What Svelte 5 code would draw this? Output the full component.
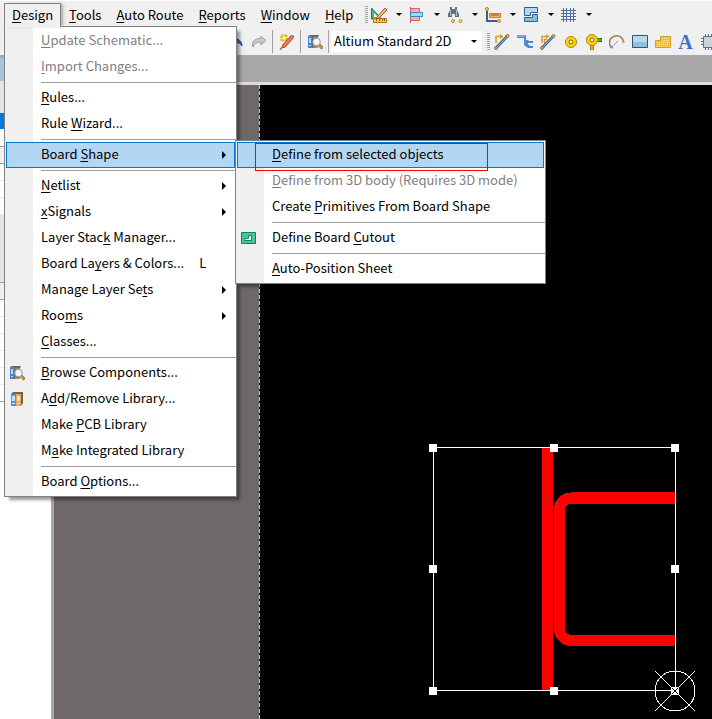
<script>
  const menus = ['_Design', '_Tools', '_Auto Route', '_Reports', '_Window', '_Help'];

  const designMenu = [
    { label: '_Update Schematic...', disabled: true },
    { label: '_Import Changes...', disabled: true },
    null,
    { label: '_Rules...' },
    { label: 'Rule _Wizard...' },
    null,
    { label: 'Board _Shape', submenu: true, open: true },
    null,
    { label: '_Netlist', submenu: true },
    { label: '_xSignals', submenu: true },
    { label: 'Layer Stac_k Manager...' },
    { label: 'Board La_yers & Colors...', shortcut: 'L' },
    { label: 'Manage Layer Se_ts', submenu: true },
    { label: 'Roo_ms', submenu: true },
    { label: '_Classes...' },
    null,
    { label: '_Browse Components...', icon: 'browse' },
    { label: 'A_dd/Remove Library...', icon: 'library' },
    { label: 'Make _PCB Library' },
    { label: 'M_ake Integrated Library' },
    null,
    { label: 'Board _Options...' }
  ];

  const shapeMenu = [
    { label: '_Define from selected objects', active: true },
    { label: '_Define from 3D body (Requires 3D mode)', disabled: true },
    { label: 'Create _Primitives From Board Shape' },
    null,
    { label: 'Define Board _Cutout', icon: 'cutout' },
    null,
    { label: '_Auto-Position Sheet' }
  ];

  const utilityTools = ['draw', 'align', 'find', 'dimension', 'room', 'grid'];
  const placeTools = ['route', 'diffpair', 'multiroute', 'pad', 'via', 'arc', 'fill', 'polygon', 'text', 'component'];

  // rows of the side panel: [height, style]
  const panelRows = [
    [3, 'edge'], [23, 'heading'], [32, 'tools'], [16, 'selected'], [17, 'blank'],
    [18, 'cell'], [17, 'row'], [17, 'row'], [16, 'blank'], [68, 'tools'],
    [18, 'cell'], [17, 'row'], [17, 'row'], [17, 'row'], [17, 'row'], [17, 'row'], [17, 'last']
  ];

  const handles = [[14, 14], [135, 14], [256, 14], [14, 135], [256, 135], [14, 257], [135, 257], [256, 257]];

  // the letter after "_" is the access key
  function split(label) {
    const i = label.indexOf('_');
    return [label.slice(0, i), label[i + 1], label.slice(i + 2)];
  }
</script>

{#snippet caption(label)}
  {@const [before, key, after] = split(label)}
  <span class="caption">{before}<u>{key}</u>{after}</span>
{/snippet}

{#snippet icon(name)}
  <svg class="icon" viewBox="0 0 16 16" width="16" height="16" aria-hidden="true">
    {#if name === 'browse'}
      <path d="M1 2l2-1h9l-1 2v11H1z" fill="#5e6a78" />
      <path d="M1 2h4v12H1z" fill="#4a86d8" />
      <path d="M2 4h2v5H2zM2 11h2v1H2z" fill="#b9d6f7" />
      <path d="M6 3h5v11H6z" fill="#b08b4e" />
      <circle cx="9.5" cy="8" r="3.8" fill="#f4f9fd" stroke="#8796a8" />
      <path d="M12.2 11l3.3 3.5" stroke="#7a5316" stroke-width="3" />
      <path d="M12.2 11l3 3.2" stroke="#e2a545" stroke-width="1.6" />
    {:else if name === 'library'}
      <path d="M2 3l2-2h10v11l-2 3H2z" fill="#76624c" />
      <path d="M2 3h5v12H2z" fill="#5590da" />
      <path d="M3 5h3v5H3zM3 12h3v1H3z" fill="#c8defa" />
      <path d="M7 3h5v12H7z" fill="#e5aa5c" />
      <path d="M8 5h3v5H8zM8 12h3v1H8z" fill="#fbe2ae" />
    {:else if name === 'cutout'}
      <path d="M1.5 2.5h14v11h-14z" fill="#4fc597" stroke="#078458" />
      <path d="M8.5 5.5h3v5h-7v-2h4z" fill="#fff" stroke="#13855d" />
    {:else if name === 'undo'}
      <path d="M6 3L1 7l5 4V9c4-1 6 0 8 3 0-5-4-8-8-7z" fill="#3b6fc4" stroke="#2a4e94" />
    {:else if name === 'redo'}
      <path d="M10 2l5 4.5-5 4.5V8.500C6 7.500 3 10 2 13 0 8 4 4 10 4.500z" fill="#c6caca" stroke="#999fa0" />
    {:else if name === 'pen'}
      <path d="M2 1h6v6H2z" fill="#f9dc3c" stroke="#c69a18" stroke-dasharray="2 1" />
      <path d="M4 3h2v2H4z" fill="#fff" />
      <path d="M1 16l4-5" stroke="#777" stroke-width="1.5" />
      <path d="M5 12l8-9" stroke="#a8442e" stroke-width="4" stroke-linecap="round" />
      <path d="M5 12l8-9" stroke="#f07c61" stroke-width="2.5" stroke-linecap="round" />
    {:else if name === 'draw'}
      <path d="M.5 1v11h10z" fill="#3abb84" stroke="#108457" />
      <path d="M3 6v4h4z" fill="#fff" />
      <path d="M2.5 11.5h13v4h-13z" fill="#f7c75b" stroke="#b8710f" />
      <path d="M5.5 12v2M8.5 12v2M11.5 12v2M13.5 12v2" stroke="#8a5515" />
      <path d="M6 10l8-9 2 2-8 8-3 1z" fill="#edbd67" stroke="#98652c" />
    {:else if name === 'align'}
      <path d="M1.5 0v16" stroke="#777" />
      <path d="M1.5 1.5h9v4h-9zM1.5 9.5h9v4h-9z" fill="#ffaaa4" stroke="#e0615e" />
      <path d="M1.5 5.5h12v4h-12z" fill="#a8d5f1" stroke="#3d89c1" />
    {:else if name === 'find'}
      <path d="M3 0h2v2h3V0h2v3l2 4v3H8V7H5v3H1V7l2-4z" fill="#627181" />
      <path d="M3.5 3v6M9.5 3v6" stroke="#b0bdca" />
      <circle cx="6" cy="14" r="1.5" fill="#ffe18c" stroke="#b78625" />
      <circle cx="13.5" cy="14" r="1.5" fill="#ffe18c" stroke="#b78625" />
    {:else if name === 'dimension'}
      <path d="M2 2v12h11" fill="none" stroke="#405f85" stroke-width="2" />
      <path d="M4.5 6.5h11v4h-11z" fill="#ffb64c" stroke="#d47914" />
      <path d="M7 7v2M9 7v2M11 7v2M13 7v2" stroke="#8d4c09" />
      <circle cx="2" cy="2" r="1.5" fill="#e5d6b1" stroke="#b98728" />
      <circle cx="14" cy="14" r="1.5" fill="#e5d6b1" stroke="#b98728" />
    {:else if name === 'room'}
      <path d="M1.5.5h13v5h-7v3h-6z" fill="#b3d8ec" stroke="#315f8a" />
      <path d="M1.5 14.5v-4h8v-3h5v7z" fill="#8bbddb" stroke="#315f8a" />
    {:else if name === 'grid'}
      <path d="M2.5 1v14M5.5 1v14M9.5 1v14M12.5 1v14M0 3.5h15M0 6.5h15M0 9.5h15M0 12.5h15" stroke="#4c6f9d" />
    {:else if name === 'route' || name === 'multiroute'}
      <path d="M2 9V2.5H7" fill="none" stroke="#d99b20" stroke-width="1.5" />
      <path d="M6 0L9.5 2.5 6 5z" fill="#d99b20" />
      {#if name === 'multiroute'}
        <path d="M4.5 9V5.5H7" fill="none" stroke="#d99b20" stroke-width="1.5" />
      {/if}
      <path d="M2 14l11-11.5" stroke="#486887" stroke-width="3" />
      <path d="M2 14l11-11.5" stroke="#9fb6cb" />
      <circle cx="2" cy="14" r="1.5" fill="#cdbb96" stroke="#8f6c32" />
      <circle cx="13.5" cy="2" r="1.5" fill="#cdbb96" stroke="#8f6c32" />
    {:else if name === 'diffpair'}
      <path d="M0 1h9v5h2l1 1h4v2h-5v1l2 2h3v2h-5l-4-3V4H0z" fill="#5288d3" />
      <path d="M0 1h8v2H0z" fill="#79a8e8" />
    {:else if name === 'pad'}
      <circle cx="8" cy="8" r="5.5" fill="#fdd800" stroke="#bd7e06" />
      <circle cx="8" cy="8" r="2" fill="#fff" stroke="#765b20" />
    {:else if name === 'via'}
      <path d="M4.5 10h3v6h-3z" fill="#f9a632" stroke="#c47513" />
      <path d="M10 4.5h6v3h-6z" fill="#65b30c" stroke="#347503" />
      <circle cx="6" cy="6" r="5.5" fill="#fdd800" stroke="#bd7e06" />
      <circle cx="6" cy="6" r="2" fill="#fff" stroke="#765b20" />
    {:else if name === 'arc'}
      <path d="M2 13A7 7 0 1 1 14.5 8" fill="none" stroke="#a97d5b" stroke-width="1.5" />
      <path d="M3 13l6-6" stroke="#536fa5" stroke-dasharray="2 1" />
      <circle cx="2.5" cy="13" r="1.5" fill="#7c8db8" />
      <circle cx="14.5" cy="8" r="1.2" fill="#d29d45" />
    {:else if name === 'fill'}
      <path d="M.5 1.5h15v12H.5z" fill="#8ec1df" stroke="#2b587b" />
      <path d="M1 2h14v6H1z" fill="#b8dcee" />
    {:else if name === 'polygon'}
      <path d="M.5 6.5h5v-4h10v11H.5z" fill="#edbd49" stroke="#dc9d1c" />
      <path d="M7 4.5h8M7 6.5h8M2 8.5h13M2 10.5h13M2 12.5h13" stroke="#fff0a8" stroke-dasharray="1 1" />
    {:else if name === 'component'}
      <path d="M4.5 0v16M7.5 0v16M10.5 0v16M13.5 0v16M0 4.5h16M0 7.5h16M0 10.5h16" stroke="#5e7287" />
      <path d="M2.5 2.5h13v11h-13z" fill="#cbd2d9" stroke="#5e7287" />
    {/if}
  </svg>
{/snippet}

{#snippet entry(item)}
  {#if item}
    <li role="none" class="entry">
      <button class="item" class:active={item.active || item.open} disabled={item.disabled} role="menuitem">
        <span class="gutter">
          {#if item.icon}{@render icon(item.icon)}{/if}
        </span>
        {@render caption(item.label)}
        {#if item.shortcut}<kbd>{item.shortcut}</kbd>{/if}
        {#if item.submenu}<span class="more"></span>{/if}
      </button>
      {#if item.open}
        <ul class="menu submenu" role="menu">
          {#each shapeMenu as sub}
            {@render entry(sub)}
          {/each}
          <li class="marker" role="none"></li>
        </ul>
      {/if}
    </li>
  {:else}
    <li class="separator" role="separator"></li>
  {/if}
{/snippet}

<div class="app">
  <header>
    <div class="bar">
      <nav>
        {#each menus as label, i}
          <div class="top">
            <button class="title" class:open={i === 0}>{@render caption(label)}</button>
            {#if i === 0}
              <ul class="menu dropdown" role="menu">
                {#each designMenu as item}
                  {@render entry(item)}
                {/each}
              </ul>
            {/if}
          </div>
        {/each}
      </nav>
      <span class="grip"></span>
      <div class="utilities">
        {#each utilityTools as tool}
          <button class="tool split" aria-label={tool}>{@render icon(tool)}<span class="arrow"></span></button>
        {/each}
      </div>
    </div>

    <div class="bar second">
      <button class="tool" aria-label="undo">{@render icon('undo')}</button>
      <button class="tool" aria-label="redo">{@render icon('redo')}</button>
      <span class="divider"></span>
      <button class="tool" aria-label="pen">{@render icon('pen')}</button>
      <span class="divider"></span>
      <button class="tool" aria-label="browse">{@render icon('browse')}</button>
      <span class="divider"></span>
      <div class="combo">
        <select aria-label="View configuration">
          <option>Altium Standard 2D</option>
        </select>
        <span class="arrow"></span>
      </div>
      <span class="grip"></span>
      <div class="place">
        {#each placeTools as tool}
          <button class="tool" aria-label={tool}>
            {#if tool === 'text'}
              <span class="letter">A</span>
            {:else}
              {@render icon(tool)}
            {/if}
          </button>
        {/each}
      </div>
    </div>
  </header>

  <main>
    <aside>
      {#each panelRows as [height, kind]}
        <div class="panel-row {kind}" style="height: {height}px"></div>
      {/each}
    </aside>
    <div class="splitter"></div>
    <section>
      <div class="tabs"></div>
      <div class="workspace">
        <div class="board">
          <svg class="selection" viewBox="0 0 300 300" width="300" height="300" shape-rendering="crispEdges">
            <path d="M128.5 14v243" stroke="#f00" stroke-width="11" />
            <path d="M256 64H152a11.5 11.5 0 0 0-11.5 11.5v119.500a11.5 11.5 0 0 0 11.5 11.5h104" fill="none" stroke="#f00" stroke-width="11" />
            <path d="M152 58h104v2H152z" fill="#f00" />
            <path d="M14.5 13.5h242v243h-242z" fill="none" stroke="#fff" />
            {#each handles as [x, y]}
              <rect x={x - 4} y={y - 4} width="8" height="8" fill="#fff" />
            {/each}
            <circle cx="256" cy="257" r="20" fill="none" stroke="#fff" />
            <path d="M236 237l40 40M276 237l-40 40" stroke="#fff" />
            <path d="M253 254l6 6M259 254l-6 6" stroke="#000" />
          </svg>
        </div>
      </div>
    </section>
  </main>
</div>

<style>
  :global(body) {
    margin: 0;
  }

  .app {
    display: flex;
    flex-direction: column;
    min-height: 100vh;
    overflow: hidden;
    background: #f0f0f0;
    color: #000;
    font-family: 'Noto Sans CJK SC', 'Noto Sans', sans-serif;
    font-size: 13px;
    line-height: 18px;
  }

  button,
  select {
    margin: 0;
    padding: 0;
    border: 0;
    background: none;
    color: inherit;
    font: inherit;
  }

  ul {
    margin: 0;
    padding: 0;
    list-style: none;
  }

  u {
    text-decoration: underline 1px;
    text-decoration-skip-ink: none;
    text-underline-offset: 2px;
  }

  .caption {
    white-space: pre;
  }

  .icon {
    display: block;
    flex: none;
  }

  /* menu bar and toolbars */
  header {
    position: relative;
    z-index: 2;
    border-top: 1px solid #fff;
  }

  .bar {
    display: flex;
    align-items: center;
    height: 27px;
    padding-left: 4px;
  }

  .second {
    padding-left: 224px;
  }

  nav {
    display: flex;
    align-self: stretch;
    padding-top: 2px;
  }

  .top {
    position: relative;
  }

  .title {
    height: 24px;
    padding: 0 7px 1px 8px;
  }

  .title.open {
    position: relative;
    z-index: 2;
    padding: 0 7px 2px;
    border: 1px solid #808080;
    border-bottom: 0;
    background: #f0f0f0;
    box-shadow: 3px 0 3px -1px #aaa;
  }

  .grip {
    flex: none;
    width: 3px;
    height: 17px;
    margin-left: 5px;
    background: repeating-linear-gradient(#a0a0a0 0 1px, #f0f0f0 1px 2px);
  }

  .utilities {
    display: flex;
    margin-left: 3px;
  }

  .tool {
    display: flex;
    flex: none;
    align-items: center;
    justify-content: center;
    width: 23px;
    height: 24px;
  }

  .split {
    justify-content: flex-start;
    gap: 9px;
    width: 38px;
  }

  .arrow {
    border: 3px solid transparent;
    border-top-color: #000;
    border-bottom: 0;
  }

  .divider {
    flex: none;
    width: 1px;
    height: 23px;
    margin: 0 2px;
    background: #a0a0a0;
  }

  .combo {
    display: flex;
    flex: none;
    align-items: center;
    width: 151px;
    height: 21px;
    background: #fff;
  }

  select {
    flex: 1;
    height: 21px;
    padding: 0 0 1px 3px;
    appearance: none;
    outline: 0;
  }

  .combo .arrow {
    margin-right: 5px;
  }

  .place {
    display: flex;
  }

  .letter {
    color: #3f6fce;
    font: bold 20px/20px 'Liberation Serif', serif;
  }

  /* menus */
  .menu {
    position: absolute;
    padding: 1px 0;
    border: 1px solid #808080;
    background: linear-gradient(to right, #f0f0f0 28px, #fff 28px);
    box-shadow: 4px 4px 3px -1px rgba(0, 0, 0, 0.4);
  }

  .dropdown {
    top: 23px;
    left: 0;
    width: 231px;
  }

  .submenu {
    top: -2px;
    left: calc(100% - 1px);
    width: 309px;
  }

  .entry {
    position: relative;
  }

  .item {
    display: flex;
    align-items: center;
    width: 100%;
    height: 26px;
    text-align: left;
  }

  .item .caption,
  kbd {
    padding-bottom: 2px;
  }

  .item:disabled {
    color: #808080;
  }

  .item.active {
    width: calc(100% - 2px);
    margin: 0 1px;
    background: #b3d7f3;
    box-shadow: inset 0 0 0 1px #0078d7;
  }

  .gutter {
    flex: none;
    width: 32px;
    padding-left: 4px;
  }

  .active .gutter {
    width: 31px;
  }

  kbd {
    margin-left: 15px;
    font: inherit;
  }

  .more {
    margin-left: auto;
    margin-right: 10px;
    border: 4px solid transparent;
    border-left: 4px solid #000;
    border-right: 0;
  }

  .active .more {
    margin-right: 9px;
  }

  .separator {
    height: 1px;
    margin: 2px 0 2px 36px;
    background: #a0a0a0;
  }

  .marker {
    position: absolute;
    top: 2px;
    left: 19px;
    width: 231px;
    height: 26px;
    border: 1px solid #f00;
    pointer-events: none;
  }

  /* side panel */
  main {
    display: flex;
    flex: 1;
  }

  aside {
    flex: none;
    width: 51px;
    background: #fff;
  }

  .panel-row {
    box-sizing: border-box;
  }

  .edge {
    background: #a8a8a8;
  }

  .heading {
    background: linear-gradient(to right, #a4c4dc, #b8d4e8);
  }

  .tools {
    background: #e4e4e4;
  }

  .selected {
    background: #0078d7;
  }

  .cell {
    border-top: 1px solid #a0a0a0;
    border-bottom: 1px solid #a0a0a0;
    background: #f0f0f0;
  }

  .row {
    border-bottom: 1px solid #e8e8e8;
  }

  .last {
    border-bottom: 1px solid #a0a0a0;
  }

  .splitter {
    flex: none;
    width: 3px;
    background: #a8a8a8;
  }

  /* editor */
  section {
    display: flex;
    flex: 1;
    flex-direction: column;
    min-width: 0;
  }

  .tabs {
    height: 27px;
    border-bottom: 3px solid #dcdcdc;
    background: #a8a8a8;
  }

  .workspace {
    display: flex;
    flex: 1;
    padding-left: 205px;
    background: #6e6968;
  }

  .board {
    position: relative;
    flex: 1;
    overflow: hidden;
    background:
      repeating-linear-gradient(#c8c8c8 0 4px, #000 4px 6px) left / 1px 100% no-repeat,
      #000;
  }

  .selection {
    position: absolute;
    top: 349px;
    left: 160px;
  }
</style>
